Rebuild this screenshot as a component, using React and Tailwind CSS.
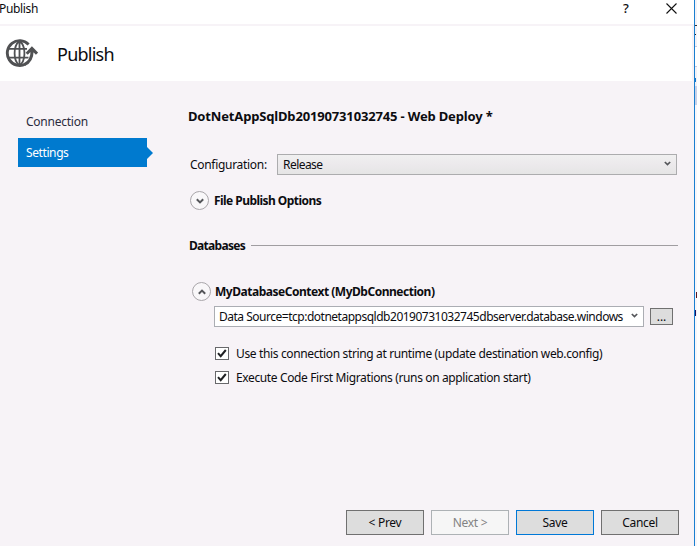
import React from "react";

function Chevron({ up = false, className = "" }) {
  return (
    <svg width="8" height="6" viewBox="0 0 8 6" fill="none" stroke="#55565a" strokeWidth="2" className={className}>
      {up ? <path d="M0.8 4.8 4 1.6 7.2 4.8" /> : <path d="M0.8 1.2 4 4.4 7.2 1.2" />}
    </svg>
  );
}

function Expander({ up }) {
  return (
    <span className="flex size-[19px] shrink-0 items-center justify-center rounded-full border border-[#a9a6aa] bg-[#f9f7f9]">
      <Chevron up={up} />
    </span>
  );
}

function GlobeIcon() {
  return (
    <svg width="33" height="29" viewBox="0 0 33 29" fill="none" stroke="#505153" className="shrink-0">
      <path d="M23.6 5.4A12.4 12.4 0 1 0 20.5 25" strokeWidth="2.9" />
      <path d="M14.5 2C10.6 5 9.6 9 9.6 14.3S10.9 24 14.5 26.5M14.5 2C18.2 5 19.4 9 19.4 13V15.5C19.2 20.5 18 24 14.5 26.5M14.5 2V27M3 9.8H22M3 18.6H23.5" strokeWidth="1.8" />
      <path d="M21.7 14.7 26.9 9.4 32 14.7M27 10.5C27.5 17.5 26 22.5 19.5 25.5" strokeWidth="3" />
    </svg>
  );
}

function Check({ children, tracking }) {
  return (
    <label className="flex h-6 items-center">
      <span className="flex h-[13px] w-[14px] shrink-0 items-center justify-center border border-[#68686b] bg-white">
        <svg width="12" height="11" viewBox="0 0 12 11" fill="none" stroke="#202124" strokeWidth="2">
          <path d="M2 5.2 4.7 8.2 9.8 2" />
        </svg>
      </span>
      <span className={"ml-[7px] pt-0.5 " + tracking}>{children}</span>
    </label>
  );
}

function Button({ children, className }) {
  return <button className={"flex h-[25px] w-[78px] items-center justify-center border " + className}>{children}</button>;
}

export default function App() {
  return (
    <div className="flex h-[546px] w-[697px] overflow-hidden whitespace-nowrap bg-[#f7f3f7] font-['Noto_Sans','Open_Sans',sans-serif] text-[12px] leading-4 text-[#0c0c10]">
      <div className="flex w-[694px] shrink-0 flex-col">
        <div className="flex h-6 bg-white pt-px">
          <span className="-ml-px w-[624px] tracking-[-0.35px]">Publish</span>
          <span className="-mt-px w-[43px] text-[13px] font-medium">?</span>
          <svg width="11" height="11" viewBox="0 0 11 11" stroke="#111" strokeWidth="1.1" className="mt-0.5">
            <path d="M.5.5 10.5 10.5M10.5.5.5 10.5" />
          </svg>
        </div>
        <header className="mt-0.5 flex h-[55px] w-[692px] items-center bg-white pl-[5px]">
          <GlobeIcon />
          <h1 className="ml-[19px] text-[18px] leading-6 tracking-[-0.75px]">Publish</h1>
        </header>
        <div className="flex h-[429px]">
          <nav className="w-[188px] pt-[26px] pl-[18px] text-[#2b2b3d]">
            <div className="flex h-[31px] items-center pb-px pl-2 tracking-[-0.25px]">Connection</div>
            <div className="flex items-center">
              <div className="flex h-[29px] w-[129px] items-center bg-[#007acf] pt-px pl-2 tracking-[-0.4px] text-white">Settings</div>
              <svg width="6" height="12" viewBox="0 0 6 12" fill="#007acf"><path d="M0 0 6 6 0 12Z" /></svg>
            </div>
          </nav>
          <main className="flex w-[490px] flex-col pt-[27px]">
            <h2 className="h-[46px] text-[13px] font-bold tracking-[-0.16px]">DotNetAppSqlDb20190731032745 - Web Deploy *</h2>
            <div className="flex h-[21px] items-center pl-0.5">
              <span className="w-[87px] tracking-[-0.3px]">Configuration:</span>
              <div className="flex h-[21px] w-[400px] items-center justify-between border border-[#acacae] bg-linear-to-b from-[#f0f0f0] via-[#ece9ec] to-[#e5e5e5] pr-[5px] pl-[5px]">
                <span className="tracking-[-0.55px]">Release</span>
                <Chevron className="mb-0.5 h-[5px] w-[7px]" />
              </div>
            </div>
            <div className="mt-4 flex h-[19px] items-center gap-[5px] pl-0.5 font-bold tracking-[-0.55px]">
              <Expander />File Publish Options
            </div>
            <div className="mt-[27px] flex h-4 items-center gap-1.5 pl-px font-bold">
              <span className="w-14 pt-0.5 tracking-[-0.7px]">Databases</span>
              <span className="h-px flex-1 bg-[#a09da1]" />
            </div>
            <div className="mt-[29px] flex h-[19px] items-center gap-1 pl-1 font-bold tracking-[-0.48px]">
              <Expander up />MyDatabaseContext (MyDbConnection)
            </div>
            <div className="mt-[5px] flex h-[21px] items-center pl-[26px]">
              <div className="flex h-[21px] w-[430px] items-center justify-between border border-[#abadb3] bg-white pr-[5px] pl-1">
                <span className="tracking-[-0.49px]">Data Source=tcp:dotnetappsqldb20190731032745dbserver.database.windows</span>
                <Chevron className="mb-0.5 h-[5px] w-[7px]" />
              </div>
              <button className="ml-1.5 flex h-[17px] w-[23px] items-center justify-center border border-[#707070] bg-[#ddd]">...</button>
            </div>
            <div className="mt-[14px] pl-[27px]">
              <Check tracking="tracking-[-0.36px]">Use this connection string at runtime (update destination web.config)</Check>
              <Check tracking="tracking-[-0.37px]">Execute Code First Migrations (runs on application start)</Check>
            </div>
          </main>
        </div>
        <footer className="flex gap-[7px] pl-[346px] tracking-[-0.3px]">
          <Button className="border-[#707070] bg-[#ddd]">&lt; Prev</Button>
          <Button className="border-[#adb2b5] bg-[#f6f6f6] text-[#838383]">Next &gt;</Button>
          <Button className="border-[#0078d7] bg-[#ddd]">Save</Button>
          <Button className="border-[#707070] bg-[#ddd]">Cancel</Button>
        </footer>
      </div>
      <div className="w-px shrink-0 bg-[#1a7fd0]" />
      <div className="flex w-0.5 shrink-0 flex-col bg-[#f3f2f7]">
        <span className="mt-[25px] h-px bg-[#333]" />
        <span className="mt-2 h-px w-px bg-[#222]" />
        <span className="mt-[11px] h-px bg-[#c5cae0]" />
        <span className="h-[19px] bg-white" />
        <span className="h-px bg-[#c5cae0]" />
        <span className="mt-[11px] h-1 w-px bg-[#1677cc]" />
        <span className="mt-1 h-[19px] bg-[#c9d2e8]" />
        <span className="h-[187px] bg-[#f8f6f9]" />
        <span className="h-1.5 w-px self-end bg-[#5a1824]" />
        <span className="h-3 bg-[#f8f6f9]" />
        <span className="h-1.5 w-px bg-[#191260]" />
        <span className="flex-1 bg-[#f8f6f9]" />
      </div>
    </div>
  );
}
